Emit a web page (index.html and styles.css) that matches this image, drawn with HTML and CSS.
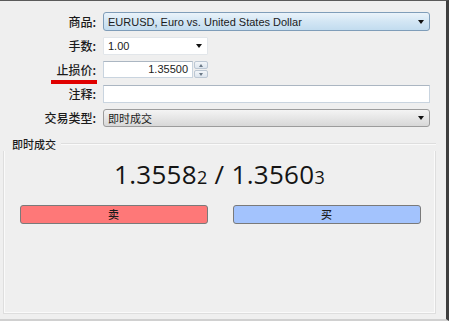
FILE: index.html
```html
<!DOCTYPE html>
<html>
<head>
<meta charset="utf-8">
<link rel="stylesheet" href="styles.css">
</head>
<body>
<div class="window">
  <div class="form">
    <div class="label">商品:</div>
    <div class="combo combo-blue wide"><span class="val">EURUSD, Euro vs. United States Dollar</span><span class="arrow"></span></div>

    <div class="label">手数:</div>
    <div class="combo combo-white small"><span class="val">1.00</span><span class="arrow"></span></div>

    <div class="label sl">止损价:<span class="redline"></span></div>
    <div class="spin small">
      <div class="spin-input">1.35500</div>
      <div class="spin-btns"><span class="up"></span><span class="down"></span></div>
    </div>

    <div class="label">注释:</div>
    <div class="text-input wide"></div>

    <div class="label">交易类型:</div>
    <div class="combo combo-gray wide"><span class="val">即时成交</span><span class="arrow"></span></div>
  </div>

  <div class="group">
    <div class="group-head"><span class="group-title">即时成交</span><span class="group-line"></span></div>
    <div class="group-body">
      <div class="prices">1.3558<span class="pip">2</span> / 1.3560<span class="pip">3</span></div>
      <div class="buttons">
        <div class="btn sell">卖</div>
        <div class="btn buy">买</div>
      </div>
    </div>
  </div>
</div>
</body>
</html>
```
FILE: styles.css
```css
html, body {
  margin: 0;
  padding: 0;
  background: #ffffff;
}
body {
  width: 451px;
  height: 323px;
  overflow: hidden;
  font-family: "Noto Sans CJK SC", "Noto Sans", sans-serif;
  color: #1b1b1b;
}
.window {
  width: 449px;
  height: 321px;
  background: #efefef;
  border-top: 1px solid #5a5a5a;
  border-right: 3px solid #3e3e3e;
  border-bottom: 2px solid #d0d0d0;
  box-sizing: border-box;
  padding-top: 12px;
}
.form {
  width: 430px;
  display: grid;
  grid-template-columns: 96px 1fr;
  grid-auto-rows: 18px;
  column-gap: 7px;
  row-gap: 6px;
}
.label {
  text-align: right;
  font-size: 12px;
  line-height: 18px;
  font-weight: 500;
  position: relative;
}
.redline {
  position: absolute;
  left: 51px;
  right: -1px;
  top: 19px;
  height: 4px;
  background: #e00000;
}
.combo, .text-input, .spin {
  box-sizing: border-box;
  height: 18px;
  display: flex;
  align-items: center;
  font-family: "Liberation Sans", "Noto Sans CJK SC", sans-serif;
  font-size: 11px;
}
.wide { width: 327px; }
.small { width: 105px; }
.combo {
  padding: 0 5px 0 4px;
  border-radius: 3px;
  justify-content: space-between;
}
.combo-blue {
  height: 19px;
  margin-top: -1px;
  border: 1px solid #7f9db9;
  background: linear-gradient(#eaf3fa, #d3e6f4 50%, #c2dcef);
}
.combo-white {
  border: 1px solid #e2e6ea;
  background: #ffffff;
  border-radius: 1px;
}
.combo-gray {
  border: 1px solid #9c9c9c;
  background: linear-gradient(#f4f4f4, #e6e6e6 50%, #d8d8d8);
  font-family: "Noto Sans CJK SC", sans-serif;
}
.arrow {
  width: 0;
  height: 0;
  border-left: 3.5px solid transparent;
  border-right: 3.5px solid transparent;
  border-top: 4px solid #111;
}
.text-input {
  border: 1px solid #c9d4df;
  border-top-color: #abb6c2;
  background: #fff;
}
.spin {
  gap: 1px;
  margin-top: -1px;
}
.spin-input {
  box-sizing: border-box;
  width: 90px;
  height: 17px;
  background: #fff;
  border: 1px solid #c9d4df;
  border-top-color: #abb6c2;
  text-align: right;
  padding-right: 4px;
  line-height: 15px;
}
.spin-btns {
  width: 14px;
  height: 17px;
  display: flex;
  flex-direction: column;
  gap: 1px;
}
.spin-btns span {
  flex: 1;
  background: linear-gradient(#f3f6f9, #dde5ee);
  border: 1px solid #bcc7d3;
  border-radius: 2px;
  position: relative;
}
.spin-btns span::after {
  content: "";
  position: absolute;
  left: 4px;
  top: 2px;
  border-left: 2.5px solid transparent;
  border-right: 2.5px solid transparent;
}
.spin-btns .up::after { border-bottom: 3px solid #6a7886; }
.spin-btns .down::after { border-top: 3px solid #6a7886; }
.group {
  margin: 10px 0 0 3px;
  width: 433px;
}
.group-head {
  display: flex;
  align-items: center;
  height: 14px;
}
.group-title {
  font-size: 11px;
  font-weight: 500;
  padding: 0 5px 0 9px;
  line-height: 14px;
}
.group-line {
  flex: 1;
  height: 0;
  border-top: 1px solid #dedede;
  border-bottom: 1px solid #fafafa;
}
.group-body {
  box-sizing: border-box;
  height: 163px;
  border: 1px solid #dedede;
  border-top: none;
  box-shadow: inset 1px 0 #fafafa, inset -1px -1px #fafafa;
  padding-top: 7px;
}
.prices {
  text-align: center;
  font-family: "Open Sans", "DejaVu Sans", sans-serif;
  font-size: 26px;
  line-height: 33px;
  color: #141414;
  letter-spacing: 0.3px;
}
.pip {
  font-size: 18px;
}
.buttons {
  display: flex;
  justify-content: center;
  gap: 25px;
  margin-top: 11px;
  padding-left: 1px;
}
.btn {
  box-sizing: border-box;
  width: 188px;
  height: 19px;
  border: 1px solid #7a7a7a;
  border-radius: 3px;
  text-align: center;
  font-size: 11px;
  line-height: 17px;
  font-weight: 500;
}
.sell { background: #fe7878; }
.buy { background: #a3c3fd; }
```
